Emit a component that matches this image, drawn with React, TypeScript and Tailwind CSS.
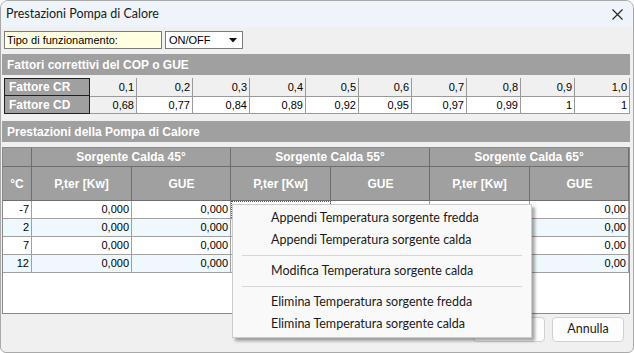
const crValues = ["0,1", "0,2", "0,3", "0,4", "0,5", "0,6", "0,7", "0,8", "0,9", "1,0"];
const cdValues = ["0,68", "0,77", "0,84", "0,89", "0,92", "0,95", "0,97", "0,99", "1", "1"];
const temps = ["-7", "2", "7", "12"];

const groups = ["Sorgente Calda 45°", "Sorgente Calda 55°", "Sorgente Calda 65°"];

// columns 2..4 sit under the open context menu
const hiddenCols = [2, 3, 4];

const menuItems: (string | null)[] = [
  "Appendi Temperatura sorgente fredda",
  "Appendi Temperatura sorgente calda",
  null,
  "Modifica Temperatura sorgente calda",
  null,
  "Elimina Temperatura sorgente fredda",
  "Elimina Temperatura sorgente calda",
];

const Band = ({ title, className }: { title: string; className: string }) => (
  <div className={`h-[21px] bg-[#a0a0a0] text-white font-bold text-[12px] flex items-center pl-[5px] ml-[1px] mr-[3px] ${className}`}>
    {title}
  </div>
);

const ContextMenu = () => (
  <div className="absolute left-[231px] top-[203px] w-[300px] pt-[2px] pb-[2px] bg-[#f9f9f9] border border-[#cccccc] shadow-[3px_3px_3px_rgba(0,0,0,0.35)] font-['Lato',sans-serif] text-[12.5px] text-[#1a1a1a]">
    {menuItems.map((item, i) =>
      item ? (
        <div key={i} className="h-[22px] flex items-center pl-[38px]">
          {item}
        </div>
      ) : (
        <div key={i} className="h-[9px] flex items-center px-[9px]">
          <div className="h-px w-full bg-[#d6d6d6]" />
        </div>
      )
    )}
  </div>
);

export default function App() {
  return (
    <div className="relative w-[634px] h-[353px] bg-[#f0f0f0] border border-[#a9a9a9] rounded-t-[8px] rounded-b-[6px] overflow-hidden flex flex-col font-['Liberation_Sans',Arial,sans-serif] text-[11px] text-black">
      {/* title bar */}
      <div className="h-[26px] shrink-0 bg-[#eef4f9] flex items-center justify-between pl-[5px] pr-[10px]">
        <span className="font-['Lato',sans-serif] text-[12.5px] text-[#1a1a1a]">Prestazioni Pompa di Calore</span>
        <svg width="11" height="11" viewBox="0 0 11 11" className="text-[#222]">
          <path d="M0.5 0.5L10.5 10.5M10.5 0.5L0.5 10.5" stroke="currentColor" strokeWidth="1.1" fill="none" />
        </svg>
      </div>

      {/* tipo di funzionamento */}
      <div className="mt-[4px] ml-[3px] flex gap-[3px] h-[18px]">
        <div className="w-[158px] bg-[#ffffe1] border border-[#7a7a7a] flex items-center pl-[2px]">Tipo di funzionamento:</div>
        <div className="w-[78px] bg-white border border-[#7a7a7a] flex items-center justify-between pl-[3px] pr-[5px]">
          <span>ON/OFF</span>
          <svg width="8" height="5" viewBox="0 0 8 5">
            <path d="M0 0H8L4 4.5Z" fill="#111" />
          </svg>
        </div>
      </div>

      <Band title="Fattori correttivi del COP o GUE" className="mt-[5px]" />

      {/* fattori table */}
      <div className="mt-[3px] ml-[3px] grid grid-cols-[86px_47px_56px_57px_56px_53px_53px_55px_54px_54px_55px] grid-rows-[18px_18px]">
        <div className="row-span-2 col-start-1 row-start-1 border border-[#1e1e1e] bg-[#a0a0a0] grid grid-rows-2 text-white font-bold text-[12px]">
          <div className="flex items-center pl-[4px] border-b border-[#1e1e1e]">Fattore CR</div>
          <div className="flex items-center pl-[4px]">Fattore CD</div>
        </div>
        {crValues.map((v, i) => (
          <div key={`cr${i}`} className="row-start-1 flex items-center justify-end pr-[2px] border-r border-[#9a9a9a]">
            {v}
          </div>
        ))}
        {cdValues.map((v, i) => (
          <div
            key={`cd${i}`}
            className={`row-start-2 flex items-center justify-end pr-[2px] border-r border-y border-[#9a9a9a] ${i === 0 ? "bg-[#f0f0f0]" : "bg-white"}`}
          >
            {v}
          </div>
        ))}
      </div>

      <Band title="Prestazioni della Pompa di Calore" className="mt-[7px]" />

      {/* main grid */}
      <div className="mt-[5px] ml-[1px] mr-[3px] h-[167px] bg-white border border-[#8a8a8a] flex flex-col">
        <div className="grid grid-cols-[29px_199px_199px_199px] grid-rows-[19px_33px] bg-[#a0a0a0] text-white font-bold text-[12px] border-b border-[#6e6e6e]">
          <div className="border-r border-b border-[#6e6e6e]" />
          {groups.map((g) => (
            <div key={g} className="flex items-center justify-center border-r border-b border-[#6e6e6e]">
              {g}
            </div>
          ))}
          <div className="flex items-center justify-center border-r border-[#6e6e6e]">°C</div>
          {groups.map((g) => (
            <div key={`s${g}`} className="grid grid-cols-[100px_99px] border-r border-[#6e6e6e]">
              <div className="flex items-center justify-center border-r border-[#6e6e6e]">P,ter [Kw]</div>
              <div className="flex items-center justify-center">GUE</div>
            </div>
          ))}
        </div>
        {temps.map((t, r) => (
          <div
            key={t}
            className={`grid grid-cols-[29px_100px_99px_100px_99px_100px_99px] h-[18px] border-b border-[#a0a0a0] ${r % 2 ? "bg-[#eef8fd]" : "bg-white"}`}
          >
            <div className="flex items-center justify-end pr-[2px] border-r border-[#a0a0a0]">{t}</div>
            {[0, 1, 2, 3, 4, 5].map((c) => (
              <div
                key={c}
                className={`flex items-center justify-end pr-[2px] border-r border-[#a0a0a0] ${r === 0 && c === 2 ? "outline outline-1 outline-dotted outline-[#555] -outline-offset-1" : ""}`}
              >
                {hiddenCols.includes(c) ? "" : c < 4 ? "0,000" : "0,00"}
              </div>
            ))}
          </div>
        ))}
      </div>

      {/* buttons */}
      <div className="mt-[3px] flex justify-end gap-[7px] pr-[9px]">
        <button className="w-[72px] h-[25px] rounded-[4px] border border-[#d0d0d0] bg-[#fdfdfd] font-['Lato',sans-serif] text-[12.5px] text-[#1a1a1a] flex items-center justify-center pt-[9px]">
          OK
        </button>
        <button className="w-[72px] h-[25px] rounded-[4px] border border-[#d0d0d0] bg-[#fdfdfd] font-['Lato',sans-serif] text-[12.5px] text-[#1a1a1a]">
          Annulla
        </button>
      </div>

      <ContextMenu />
    </div>
  );
}
